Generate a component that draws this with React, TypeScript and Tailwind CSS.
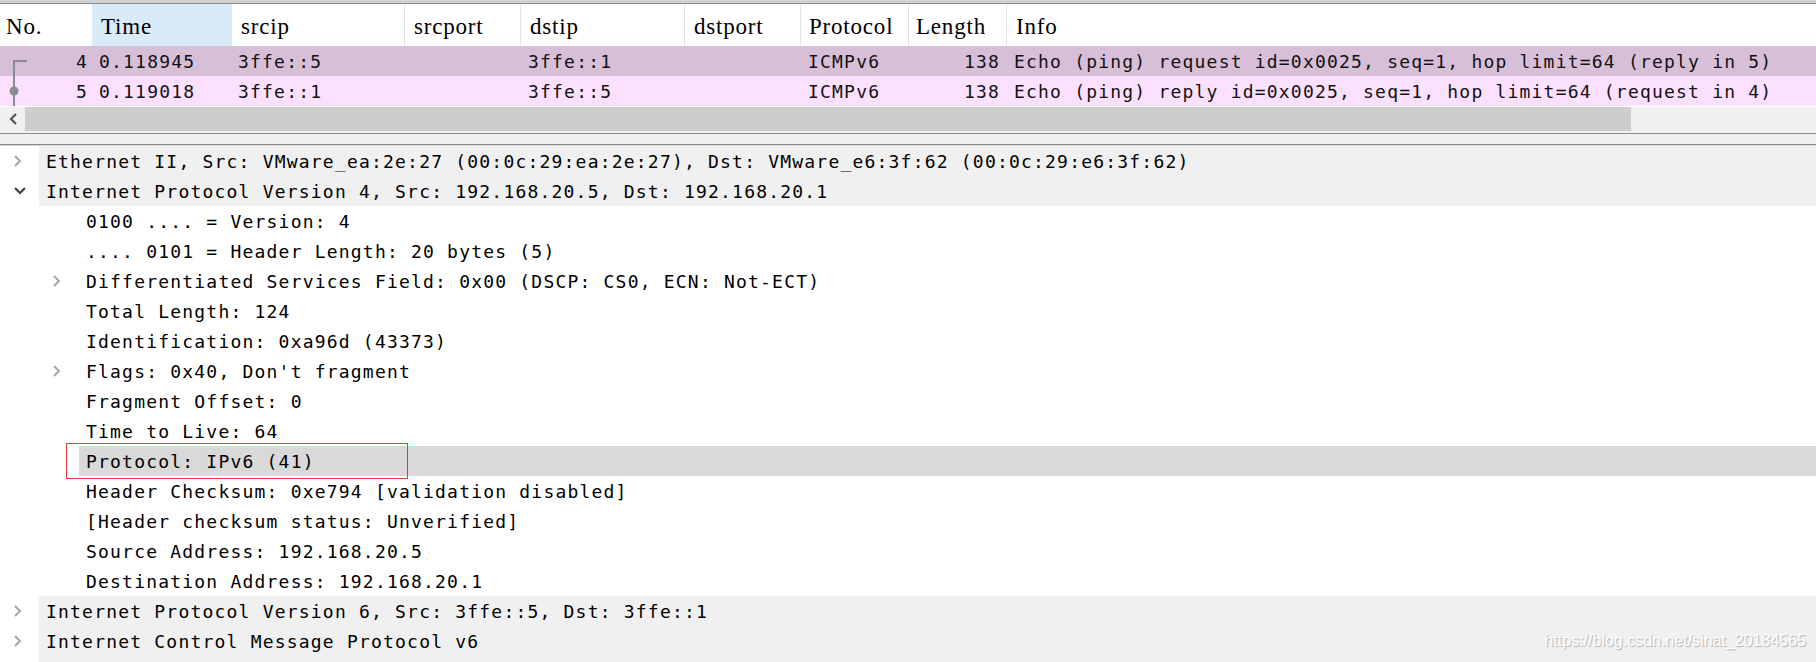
import React from 'react';

const mono = "font-['DejaVu_Sans_Mono',monospace] text-[18px] tracking-[1.2px] text-[#111]";

const cols = [
  { label: 'No.', w: 'w-[92px]', hpad: 'pl-[6px]' },
  { label: 'Time', w: 'w-[139px]', hpad: 'pl-[9px]' },
  { label: 'srcip', w: 'w-[173px]', hpad: 'pl-[9px]' },
  { label: 'srcport', w: 'w-[116px]', hpad: 'pl-[9px]' },
  { label: 'dstip', w: 'w-[164px]', hpad: 'pl-[9px]' },
  { label: 'dstport', w: 'w-[116px]', hpad: 'pl-[9px]' },
  { label: 'Protocol', w: 'w-[108px]', hpad: 'pl-[8px]' },
  { label: 'Length', w: 'w-[98px]', hpad: 'pl-[7px]' },
  { label: 'Info', w: 'flex-1', hpad: 'pl-[9px]' },
];

const packets = [
  {
    no: '4',
    time: '0.118945',
    src: '3ffe::5',
    dst: '3ffe::1',
    proto: 'ICMPv6',
    len: '138',
    info: 'Echo (ping) request id=0x0025, seq=1, hop limit=64 (reply in 5)',
    bg: 'bg-[#d8bfd8]',
    first: true,
  },
  {
    no: '5',
    time: '0.119018',
    src: '3ffe::1',
    dst: '3ffe::5',
    proto: 'ICMPv6',
    len: '138',
    info: 'Echo (ping) reply id=0x0025, seq=1, hop limit=64 (request in 4)',
    bg: 'bg-[#fce0ff]',
    first: false,
  },
];

type Node = { level: 0 | 1; arrow?: 'open' | 'closed'; text: string; mark?: boolean };

const tree: Node[] = [
  { level: 0, arrow: 'closed', text: 'Ethernet II, Src: VMware_ea:2e:27 (00:0c:29:ea:2e:27), Dst: VMware_e6:3f:62 (00:0c:29:e6:3f:62)' },
  { level: 0, arrow: 'open', text: 'Internet Protocol Version 4, Src: 192.168.20.5, Dst: 192.168.20.1' },
  { level: 1, text: '0100 .... = Version: 4' },
  { level: 1, text: '.... 0101 = Header Length: 20 bytes (5)' },
  { level: 1, arrow: 'closed', text: 'Differentiated Services Field: 0x00 (DSCP: CS0, ECN: Not-ECT)' },
  { level: 1, text: 'Total Length: 124' },
  { level: 1, text: 'Identification: 0xa96d (43373)' },
  { level: 1, arrow: 'closed', text: "Flags: 0x40, Don't fragment" },
  { level: 1, text: 'Fragment Offset: 0' },
  { level: 1, text: 'Time to Live: 64' },
  { level: 1, text: 'Protocol: IPv6 (41)', mark: true },
  { level: 1, text: 'Header Checksum: 0xe794 [validation disabled]' },
  { level: 1, text: '[Header checksum status: Unverified]' },
  { level: 1, text: 'Source Address: 192.168.20.5' },
  { level: 1, text: 'Destination Address: 192.168.20.1' },
  { level: 0, arrow: 'closed', text: 'Internet Protocol Version 6, Src: 3ffe::5, Dst: 3ffe::1' },
  { level: 0, arrow: 'closed', text: 'Internet Control Message Protocol v6' },
];

function Arrow({ kind }: { kind: 'open' | 'closed' }) {
  if (kind === 'open') {
    return (
      <svg width="12" height="8" viewBox="0 0 12 8">
        <polyline points="1,1 6,6 11,1" fill="none" stroke="#3a3a3a" strokeWidth="2" />
      </svg>
    );
  }
  return (
    <svg width="8" height="12" viewBox="0 0 8 12">
      <polyline points="1,1 6,6 1,11" fill="none" stroke="#a6a6a6" strokeWidth="2" />
    </svg>
  );
}

function PacketRow({ p }: { p: (typeof packets)[number] }) {
  return (
    <div className={`flex h-[30px] items-center ${p.bg} ${mono}`}>
      <div className="relative flex h-full w-[92px] items-center justify-end pr-[4px]">
        <svg className="absolute left-0 top-0" width="30" height="30" viewBox="0 0 30 30">
          {p.first ? (
            <>
              <line x1="13" y1="15" x2="27" y2="15" stroke="#878d92" strokeWidth="2" />
              <line x1="14" y1="14" x2="14" y2="30" stroke="#878d92" strokeWidth="2" />
            </>
          ) : (
            <>
              <line x1="14" y1="0" x2="14" y2="30" stroke="#878d92" strokeWidth="2" />
              <circle cx="14" cy="15" r="4.5" fill="#878d92" />
            </>
          )}
        </svg>
        {p.no}
      </div>
      <div className="w-[139px] pl-[7px]">{p.time}</div>
      <div className="w-[173px] pl-[7px]">{p.src}</div>
      <div className="w-[116px]" />
      <div className="w-[164px] pl-[8px]">{p.dst}</div>
      <div className="w-[116px]" />
      <div className="w-[108px] pl-[8px]">{p.proto}</div>
      <div className="w-[98px] pr-[6px] text-right">{p.len}</div>
      <div className="flex-1 whitespace-pre pl-[8px]">{p.info}</div>
    </div>
  );
}

function TreeRow({ n }: { n: Node }) {
  const gutter = n.level === 0 ? 'w-[39px]' : 'w-[79px]';
  const arrowBox = n.level === 0 ? 'pl-[14px]' : 'pl-[53px]';
  const bg = n.mark ? 'bg-[#d9d9d9]' : n.level === 0 ? 'bg-[#f0f0f0]' : 'bg-white';
  return (
    <div className="relative flex h-[30px] bg-white">
      <div className={`flex h-full shrink-0 items-center ${gutter} ${arrowBox}`}>
        {n.arrow && <Arrow kind={n.arrow} />}
      </div>
      <div className={`flex h-full flex-1 items-center whitespace-pre pl-[7px] ${bg} ${mono} text-black`}>
        {n.text}
      </div>
      {n.mark && (
        <div className="pointer-events-none absolute left-[66px] top-[-3px] z-10 h-[36px] w-[342px] border border-[#e2393c]" />
      )}
    </div>
  );
}

export default function App() {
  return (
    <div className="relative h-[662px] w-[1816px] overflow-hidden bg-white">
      {/* packet list */}
      <div className="h-[3px] bg-[#d2d2d2]" />
      <div className="h-px bg-[#8c8c8c]" />
      <div className="flex h-[42px] bg-white font-['Liberation_Serif',serif] text-[23px] tracking-[0.8px] text-black">
        {cols.map((c, i) => (
          <div
            key={c.label}
            className={`flex h-full items-center pt-[4px] ${c.w} ${c.hpad} ${i === 1 ? 'bg-[#d9eaf8]' : ''} ${
              i > 1 ? 'border-l border-[#e4e4e4]' : ''
            }`}
          >
            {c.label}
          </div>
        ))}
      </div>
      {packets.map((p) => (
        <PacketRow key={p.no} p={p} />
      ))}
      <div className="h-px bg-white" />
      <div className="flex h-[24px] bg-[#f0f0f0]">
        <div className="flex w-[25px] items-center justify-center">
          <svg width="10" height="12" viewBox="0 0 10 12">
            <polyline points="8,1 3,6 8,11" fill="none" stroke="#555" strokeWidth="2.2" />
          </svg>
        </div>
        <div className="w-[1606px] bg-[#cdcdcd]" />
        <div className="flex-1" />
      </div>
      <div className="h-[2px] bg-[#f0f0f0]" />
      <div className="h-px bg-[#8a8a8a]" />
      <div className="h-[10px] bg-[#f0f0f0]" />
      <div className="h-px bg-[#8a8a8a]" />
      <div className="h-px bg-[#d6d6d6]" />

      {/* details tree */}
      <div className="flex flex-col">
        {tree.map((n, i) => (
          <TreeRow key={i} n={n} />
        ))}
        <div className="flex h-[10px]">
          <div className="w-[39px] bg-white" />
          <div className="flex-1 bg-[#f0f0f0]" />
        </div>
      </div>

      <div className="absolute bottom-[9px] right-[10px] z-20 font-['Liberation_Sans',sans-serif] text-[16px] text-white [text-shadow:1px_1px_1px_rgba(0,0,0,0.28)]">
        https://blog.csdn.net/sinat_20184565
      </div>
    </div>
  );
}
